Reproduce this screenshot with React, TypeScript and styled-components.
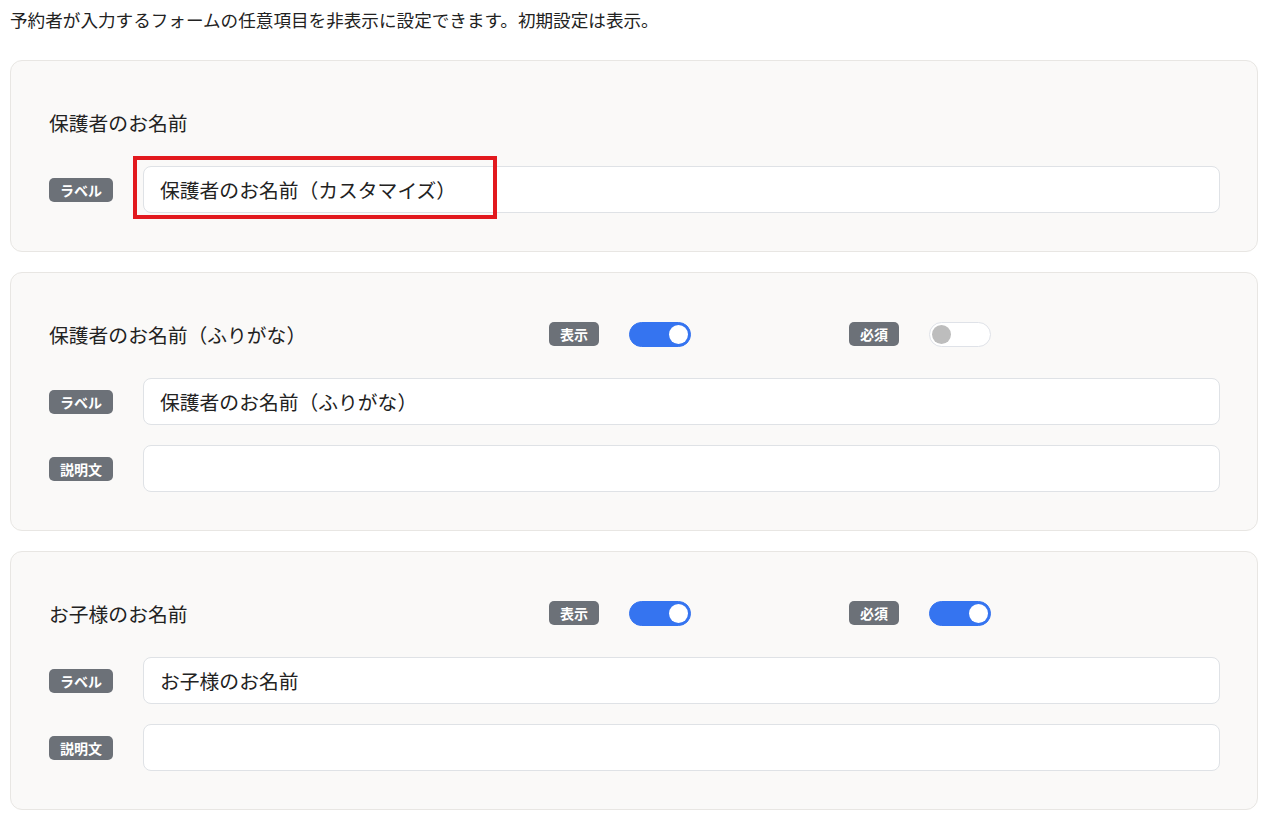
import { createGlobalStyle, styled } from "styled-components";

const GlobalStyle = createGlobalStyle`
    body {
        margin: 0;
        background: #ffffff;
        font-family: "Noto Sans CJK JP", "Noto Sans", sans-serif;
        color: #222;
    }
`

const Page = styled.div`
    padding: 9px 9px 12px 10px;
`

const Lead = styled.p`
    margin: 0 0 29px;
    font-size: 17.6px;
    line-height: 22px;
`

const List = styled.div`
    display: flex;
    flex-direction: column;
    gap: 20px;
`

const Card = styled.section`
    background: #faf9f8;
    border: 1px solid #e8e6e3;
    border-radius: 12px;
    padding: 37px 37px 38px 38px;
    display: flex;
    flex-direction: column;
    gap: 20px;
`

const Header = styled.div`
    display: flex;
    align-items: center;
    min-height: 48px;
`

const Title = styled.h3`
    margin: 0;
    width: 500px;
    font-size: 19.8px;
    font-weight: 400;
`

const SwitchGroup = styled.div`
    width: 300px;
    display: flex;
    align-items: center;
    gap: 30px;
`

const Badge = styled.span`
    display: inline-flex;
    align-items: center;
    justify-content: center;
    height: 24px;
    padding: 0 11px;
    border-radius: 5px;
    background: #6c7178;
    color: #fff;
    font-size: 14px;
    font-weight: 700;
    white-space: nowrap;
`

const Toggle = styled.span<{ $on?: boolean }>`
    position: relative;
    display: inline-block;
    box-sizing: border-box;
    width: 62px;
    height: 25px;
    border-radius: 13px;
    background: ${(p) => (p.$on ? "#3574f0" : "#ffffff")};
    border: 1px solid ${(p) => (p.$on ? "#3574f0" : "#dfe2e8")};
    &::after {
        content: "";
        position: absolute;
        top: 2px;
        left: ${(p) => (p.$on ? "39px" : "2px")};
        width: 19px;
        height: 19px;
        border-radius: 50%;
        background: ${(p) => (p.$on ? "#ffffff" : "#bdbdbd")};
    }
`

const Row = styled.div`
    display: flex;
    align-items: center;
`

const LabelCell = styled.div`
    width: 94px;
    flex-shrink: 0;
`

const Field = styled.div<{ $marked?: boolean }>`
    position: relative;
    flex: 1;
    box-sizing: border-box;
    height: 47px;
    display: flex;
    align-items: center;
    padding: 0 16px;
    background: #fff;
    border: 1px solid #dfe2e6;
    border-radius: 8px;
    font-size: 19.8px;
    color: #222;
    ${(p) =>
        p.$marked &&
        `&::before {
            content: "";
            position: absolute;
            left: -11px;
            top: -11px;
            width: 356px;
            height: 55px;
            border: 4px solid #e2191e;
            pointer-events: none;
        }`}
`

type FieldRow = { label: string; value: string; marked?: boolean }

type Item = {
    title: string
    show?: boolean
    required?: boolean
    rows: FieldRow[]
}

const items: Item[] = [
    {
        title: "保護者のお名前",
        rows: [{ label: "ラベル", value: "保護者のお名前（カスタマイズ）", marked: true }],
    },
    {
        title: "保護者のお名前（ふりがな）",
        show: true,
        required: false,
        rows: [
            { label: "ラベル", value: "保護者のお名前（ふりがな）" },
            { label: "説明文", value: "" },
        ],
    },
    {
        title: "お子様のお名前",
        show: true,
        required: true,
        rows: [
            { label: "ラベル", value: "お子様のお名前" },
            { label: "説明文", value: "" },
        ],
    },
]

function App() {
    return (
        <>
            <GlobalStyle />
            <Page>
                <Lead>予約者が入力するフォームの任意項目を非表示に設定できます。初期設定は表示。</Lead>
                <List>
                    {items.map((item) => (
                        <Card key={item.title}>
                            <Header>
                                <Title>{item.title}</Title>
                                {item.show !== undefined && (
                                    <>
                                        <SwitchGroup>
                                            <Badge>表示</Badge>
                                            <Toggle $on={item.show} />
                                        </SwitchGroup>
                                        <SwitchGroup>
                                            <Badge>必須</Badge>
                                            <Toggle $on={item.required} />
                                        </SwitchGroup>
                                    </>
                                )}
                            </Header>
                            {item.rows.map((row) => (
                                <Row key={row.label}>
                                    <LabelCell>
                                        <Badge>{row.label}</Badge>
                                    </LabelCell>
                                    <Field $marked={row.marked}>{row.value}</Field>
                                </Row>
                            ))}
                        </Card>
                    ))}
                </List>
            </Page>
        </>
    )
}

export default App;
